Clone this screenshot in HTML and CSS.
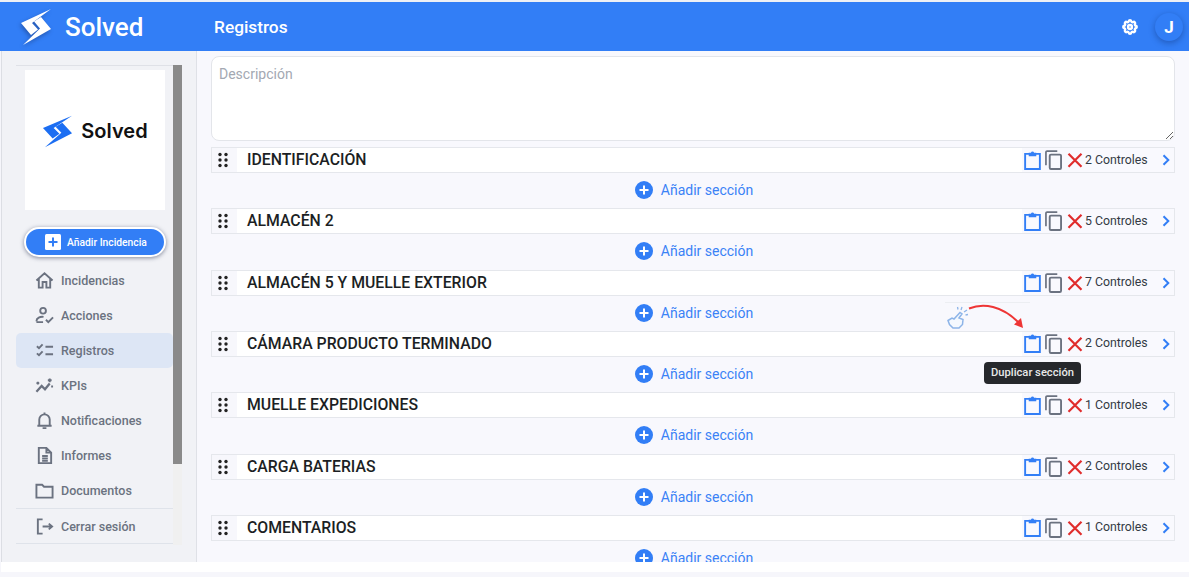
FILE: index.html
```html
<!DOCTYPE html>
<html lang="es">
<head>
<meta charset="utf-8">
<title>Registros</title>
<link rel="stylesheet" href="styles.css">
</head>
<body>
<svg class="defs" aria-hidden="true">
  <symbol id="bolt" viewBox="0 0 32 38" preserveAspectRatio="none">
    <polygon points="31,1 1,15 11,27 18,21.500 12,15"/>
    <polygon points="3,37 31,21 21,9 14,13.500 20,20.500"/>
  </symbol>
  <symbol id="i-clip" viewBox="0 0 18 21">
    <path d="M5.500 4H1.200v16h15.600V4h-4.300" fill="none" stroke="currentColor" stroke-width="2"/>
    <path d="M5 6.500V2.800h2.300a1.800 1.800 0 0 1 3.400 0H13v3.700z" fill="currentColor"/>
  </symbol>
  <symbol id="i-copy" viewBox="0 0 18 21">
    <path d="M1 16V2.200A1.200 1.200 0 0 1 2.200 1H13" fill="none" stroke="currentColor" stroke-width="1.800"/>
    <rect x="5" y="4.800" width="12" height="15.200" rx="1.300" fill="none" stroke="currentColor" stroke-width="2"/>
  </symbol>
  <symbol id="i-x" viewBox="0 0 16 16">
    <path d="M1.500 1.800L14.500 14.800M14.500 1.800L1.500 14.800" fill="none" stroke="currentColor" stroke-width="2.200"/>
  </symbol>
  <symbol id="i-chev" viewBox="0 0 8 12">
    <path d="M1.500 1.300L6.300 6 1.500 10.700" fill="none" stroke="currentColor" stroke-width="2"/>
  </symbol>
  <symbol id="i-grip" viewBox="0 0 10 16">
    <circle cx="2" cy="2.500" r="1.700"/><circle cx="8" cy="2.500" r="1.700"/>
    <circle cx="2" cy="8" r="1.700"/><circle cx="8" cy="8" r="1.700"/>
    <circle cx="2" cy="13.500" r="1.700"/><circle cx="8" cy="13.500" r="1.700"/>
  </symbol>
  <symbol id="i-add" viewBox="0 0 18 18">
    <circle cx="9" cy="9" r="9" fill="currentColor"/>
    <path d="M9 4.500v9M4.500 9h9" stroke="#fff" stroke-width="2"/>
  </symbol>
</svg>

<div class="top-strip"></div>
<header class="topbar">
  <div class="brand">
    <svg class="brand-mark"><use href="#bolt"/></svg>
    <span class="brand-name">Solved</span>
  </div>
  <h1 class="page-title">Registros</h1>
  <svg class="gear" viewBox="0 0 24 24" fill="none" stroke="currentColor" stroke-width="3.200"><path d="M10.325 4.317c.426-1.756 2.924-1.756 3.35 0a1.724 1.724 0 002.573 1.066c1.543-.94 3.31.826 2.37 2.37a1.724 1.724 0 001.065 2.572c1.756.426 1.756 2.924 0 3.35a1.724 1.724 0 00-1.066 2.573c.94 1.543-.826 3.31-2.37 2.37a1.724 1.724 0 00-2.572 1.065c-.426 1.756-2.924 1.756-3.35 0a1.724 1.724 0 00-2.573-1.066c-1.543.94-3.31-.826-2.37-2.37a1.724 1.724 0 00-1.065-2.572c-1.756-.426-1.756-2.924 0-3.35a1.724 1.724 0 001.066-2.573c-.94-1.543.826-3.31 2.37-2.37.996.608 2.296.07 2.572-1.065z"/><circle cx="12" cy="12" r="2.600"/></svg>
  <div class="avatar">J</div>
</header>

<div class="layout">
  <aside class="sidebar">
    <div class="side-col">
      <div class="logo-card">
        <svg class="logo-mark"><use href="#bolt"/></svg>
        <span class="logo-name">Solved</span>
      </div>
      <button class="add-btn" type="button">
        <svg class="add-box" viewBox="0 0 16 16"><rect width="16" height="16" rx="1.500" fill="#fff"/><path d="M8 3.500v9M3.500 8h9" stroke="#327ef6" stroke-width="2"/></svg>
        <span>Añadir Incidencia</span>
      </button>
      <nav class="nav">
        <a class="nav-item"><svg class="nav-ico" viewBox="0 0 20 20"><path d="M1.500 10L10 2.500 18.500 10M4 8v9.500h4v-6h4v6h4V8" /></svg>Incidencias</a>
        <a class="nav-item"><svg class="nav-ico" viewBox="0 0 20 20"><circle cx="8.500" cy="5" r="3"/><path d="M1.500 16c0-3.500 4-5 7.500-4.500M1.500 17h7M11.500 14.500l2.500 2.500 5-5"/></svg>Acciones</a>
        <a class="nav-item nav-active"><svg class="nav-ico" viewBox="0 0 20 20"><path d="M2 5.500l2.200 2L8 3.500M2 13l2.200 2L8 11M11 6h8M11 14h8"/></svg>Registros</a>
        <a class="nav-item"><svg class="nav-ico" viewBox="0 0 20 20"><path d="M1.500 16.500L7 10.500l3.500 3.500 5-6" stroke-width="2.400"/><path d="M15.500 2.500v4M13.500 4.500h4M3 6v3M1.500 7.500h3M18 10v2M17 11h2"/></svg>KPIs</a>
        <a class="nav-item"><svg class="nav-ico" viewBox="0 0 20 20"><path d="M4.500 15.500V9a5.500 5.500 0 0 1 11 0v6.500M2.500 15.500h15M10 1.500v2M8 18h4"/></svg>Notificaciones</a>
        <a class="nav-item"><svg class="nav-ico" viewBox="0 0 20 20"><path d="M4 2h8l5 5v11H4zM12 2v5h5M7.500 10.500h6M7.500 13h6M7.500 15.500h6"/></svg>Informes</a>
        <a class="nav-item"><svg class="nav-ico" viewBox="0 0 20 20"><path d="M1.500 4h6l2 2h9v11.500h-17z"/></svg>Documentos</a>
        <a class="nav-item nav-exit"><svg class="nav-ico" viewBox="0 0 20 20"><path d="M8 2.500H3v15h5M8 10h10M14.500 7l3.500 3-3.500 3"/></svg>Cerrar sesión</a>
      </nav>
    </div>
    <div class="scroll-track"><div class="scroll-thumb"></div></div>
  </aside>

  <main class="content">
    <textarea class="desc" placeholder="Descripción"></textarea>

    <div class="sec-row">
      <span class="grip"><svg><use href="#i-grip"/></svg></span>
      <span class="sec-title">IDENTIFICACIÓN</span>
      <span class="sec-actions">
        <svg class="a-clip"><use href="#i-clip"/></svg><svg class="a-copy"><use href="#i-copy"/></svg><svg class="a-x"><use href="#i-x"/></svg>
        <span class="a-count">2 Controles</span><svg class="a-chev"><use href="#i-chev"/></svg>
      </span>
    </div>
    <div class="add-sec"><svg><use href="#i-add"/></svg>Añadir sección</div>

    <div class="sec-row">
      <span class="grip"><svg><use href="#i-grip"/></svg></span>
      <span class="sec-title">ALMACÉN 2</span>
      <span class="sec-actions">
        <svg class="a-clip"><use href="#i-clip"/></svg><svg class="a-copy"><use href="#i-copy"/></svg><svg class="a-x"><use href="#i-x"/></svg>
        <span class="a-count">5 Controles</span><svg class="a-chev"><use href="#i-chev"/></svg>
      </span>
    </div>
    <div class="add-sec"><svg><use href="#i-add"/></svg>Añadir sección</div>

    <div class="sec-row">
      <span class="grip"><svg><use href="#i-grip"/></svg></span>
      <span class="sec-title">ALMACÉN 5 Y MUELLE EXTERIOR</span>
      <span class="sec-actions">
        <svg class="a-clip"><use href="#i-clip"/></svg><svg class="a-copy"><use href="#i-copy"/></svg><svg class="a-x"><use href="#i-x"/></svg>
        <span class="a-count">7 Controles</span><svg class="a-chev"><use href="#i-chev"/></svg>
      </span>
    </div>
    <div class="add-sec"><svg><use href="#i-add"/></svg>Añadir sección</div>

    <div class="sec-row">
      <span class="grip"><svg><use href="#i-grip"/></svg></span>
      <span class="sec-title">CÁMARA PRODUCTO TERMINADO</span>
      <span class="sec-actions">
        <svg class="a-clip"><use href="#i-clip"/></svg><svg class="a-copy"><use href="#i-copy"/></svg><svg class="a-x"><use href="#i-x"/></svg>
        <span class="a-count">2 Controles</span><svg class="a-chev"><use href="#i-chev"/></svg>
      </span>
    </div>
    <div class="add-sec"><svg><use href="#i-add"/></svg>Añadir sección</div>

    <div class="sec-row">
      <span class="grip"><svg><use href="#i-grip"/></svg></span>
      <span class="sec-title">MUELLE EXPEDICIONES</span>
      <span class="sec-actions">
        <svg class="a-clip"><use href="#i-clip"/></svg><svg class="a-copy"><use href="#i-copy"/></svg><svg class="a-x"><use href="#i-x"/></svg>
        <span class="a-count">1 Controles</span><svg class="a-chev"><use href="#i-chev"/></svg>
      </span>
    </div>
    <div class="add-sec"><svg><use href="#i-add"/></svg>Añadir sección</div>

    <div class="sec-row">
      <span class="grip"><svg><use href="#i-grip"/></svg></span>
      <span class="sec-title">CARGA BATERIAS</span>
      <span class="sec-actions">
        <svg class="a-clip"><use href="#i-clip"/></svg><svg class="a-copy"><use href="#i-copy"/></svg><svg class="a-x"><use href="#i-x"/></svg>
        <span class="a-count">2 Controles</span><svg class="a-chev"><use href="#i-chev"/></svg>
      </span>
    </div>
    <div class="add-sec"><svg><use href="#i-add"/></svg>Añadir sección</div>

    <div class="sec-row">
      <span class="grip"><svg><use href="#i-grip"/></svg></span>
      <span class="sec-title">COMENTARIOS</span>
      <span class="sec-actions">
        <svg class="a-clip"><use href="#i-clip"/></svg><svg class="a-copy"><use href="#i-copy"/></svg><svg class="a-x"><use href="#i-x"/></svg>
        <span class="a-count">1 Controles</span><svg class="a-chev"><use href="#i-chev"/></svg>
      </span>
    </div>
    <div class="add-sec"><svg><use href="#i-add"/></svg>Añadir sección</div>

    <svg class="hint" viewBox="0 0 90 32" fill="none">
      <path d="M0 .5H85" stroke="#eceef2"/>
      <path d="M24 6.500C38 1 57 3 75 22" stroke="#ee3535" stroke-width="2"/>
      <path d="M69 22.500l9 3.500-2-10z" fill="#ee3535"/>
      <path d="M3 18.500l4 -2.500 2 1 6-6.500 2 1.500-3 4 4 1.500-.5 5-3.500 3.500H8l-3.500-3.500z" stroke="#8db4e8" stroke-width="1.500" fill="#f4f8fe"/>
      <path d="M16 8l1-3M19 10l3-2M20.500 13l2.500-.500M13 7.500l-.5-2.500" stroke="#8db4e8" stroke-width="1.300"/>
    </svg>
    <div class="tooltip">Duplicar sección</div>
  </main>
</div>
<div class="bottom-white"></div>
</body>
</html>
```

FILE: styles.css
```css
* { box-sizing: border-box; }
html, body { margin: 0; height: 100%; overflow: hidden; }
body {
  display: flex;
  flex-direction: column;
  background: #f6f6fb;
  font-family: Roboto, "Liberation Sans", sans-serif;
}
.defs { display: none; }
.top-strip { height: 2px; flex: none; background: #eef0f5; }

.topbar {
  flex: none;
  height: 49px;
  display: flex;
  align-items: center;
  background: #327ef6;
  color: #fff;
  padding-left: 20px;
  padding-right: 6px;
}
.brand { width: 194px; display: flex; align-items: center; }
.brand-mark {
  width: 32px;
  height: 38px;
  fill: #fff;
  filter: drop-shadow(-1px 2px 2px rgba(20, 40, 90, .45));
}
.brand-name {
  margin-left: 13px;
  font-size: 26px;
  font-weight: 500;
  line-height: 1;
}
.page-title {
  margin: 0;
  flex: 1;
  font-size: 17.300px;
  font-weight: 500;
}
.gear { width: 18px; height: 18px; margin-right: 16px; }
.avatar {
  width: 28px;
  height: 28px;
  border-radius: 50%;
  background: #327ef6;
  box-shadow: 0 2px 6px rgba(10, 40, 100, .4);
  display: flex;
  align-items: center;
  justify-content: center;
  font-size: 17px;
  font-weight: 700;
}

.layout { flex: none; height: 511px; display: flex; overflow: hidden; }

.sidebar {
  flex: none;
  width: 196px;
  height: 100%;
  display: flex;
  align-items: flex-start;
  margin-left: 1px;
  padding: 14px 0 0 14px;
  background: #f1f2f6;
  border-left: 1px solid #dcdee4;
  border-right: 1px solid #dfe1e7;
}
.side-col { width: 157px; border-top: 1px solid #dfe1e7; }
.logo-card {
  width: 140px;
  height: 140px;
  margin: 4px 0 0 9px;
  background: #fff;
  display: flex;
  align-items: center;
  justify-content: center;
  padding-bottom: 18px;
}
.logo-mark { width: 31px; height: 33px; fill: #1c6ef2; flex: none; }
.logo-name {
  margin-left: 8px;
  font-family: Inter, "Liberation Sans", sans-serif;
  font-size: 20px;
  font-weight: 600;
  color: #111;
}
.add-btn {
  display: flex;
  align-items: center;
  width: 142px;
  height: 30px;
  margin: 17px 0 6px 8px;
  padding: 0 0 0 19px;
  border: 2px solid #fff;
  border-radius: 15px;
  background: #327ef6;
  color: #fff;
  font-family: inherit;
  font-size: 10.300px;
  font-weight: 500;
  box-shadow: 0 1px 4px rgba(40, 50, 80, .55);
}
.add-box { width: 16px; height: 16px; margin-right: 6px; flex: none; }
.nav { display: flex; flex-direction: column; }
.nav-item {
  height: 35px;
  display: flex;
  align-items: center;
  padding-left: 19px;
  font-size: 12.500px;
  font-weight: 500;
  color: #6b7280;
  border-radius: 5px;
}
.nav-active { background: #dde6f5; }
.nav-exit {
  height: 36px;
  border-top: 1px solid #dfe3ea;
  border-bottom: 1px solid #dfe3ea;
  border-radius: 0;
}
.nav-ico {
  width: 19px;
  height: 19px;
  margin-right: 7px;
  flex: none;
  fill: none;
  stroke: #6b7280;
  stroke-width: 2;
}
.scroll-track { flex: none; width: 9px; height: 480px; background: #f0f0f0; }
.scroll-thumb { height: 399px; background: #8a8a8a; }

.content {
  position: relative;
  flex: 1;
  min-width: 0;
  padding: 5px 14px 0;
  background: #f8f8fd;
}
.desc {
  display: block;
  width: 100%;
  height: 85px;
  margin: 0 0 6px;
  padding: 9px 7px;
  border: 1px solid #e3e5ea;
  border-radius: 8px;
  background: #fff;
  font-family: inherit;
  font-size: 14px;
  resize: vertical;
  outline: none;
}
.desc::placeholder { color: #a3a8b2; }

.sec-row {
  display: flex;
  align-items: center;
  height: 26px;
  border: 1px solid #e5e7ec;
  background: #fff;
}
.grip {
  flex: none;
  width: 25px;
  height: 100%;
  display: flex;
  align-items: center;
  justify-content: center;
  background: #f7f7fc;
}
.grip svg { width: 10px; height: 16px; fill: #222; margin-right: 4px; }
.sec-title {
  flex: 1;
  padding-left: 10px;
  margin-top: -1px;
  font-size: 15.800px;
  font-weight: 500;
  color: #1c1f24;
}
.sec-actions {
  flex: none;
  width: 152px;
  height: 100%;
  display: flex;
  align-items: center;
  background: #f9f9fe;
  padding-left: 2px;
  font-size: 12.300px;
  color: #333a44;
}
.a-clip { width: 17px; height: 20px; color: #327ef6; margin-right: 4px; margin-top: -1px; }
.a-copy { width: 17px; height: 20px; color: #6b7280; margin-right: 5px; }
.a-x { width: 16px; height: 16px; color: #e02d2d; margin-right: 2px; }
.a-count { width: 77px; margin-top: -1px; }
.a-chev { width: 8px; height: 12px; color: #327ef6; }

.add-sec {
  height: 35.330px;
  display: flex;
  align-items: center;
  justify-content: center;
  padding: 0 0 1px 2px;
  font-size: 14px;
  color: #3b82f6;
}
.add-sec svg { width: 18px; height: 18px; margin-right: 8px; color: #327ef6; }

.hint {
  position: absolute;
  left: 748px;
  top: 251px;
  width: 90px;
  height: 32px;
}
.tooltip {
  position: absolute;
  left: 787px;
  top: 311px;
  width: 97px;
  height: 22px;
  padding-bottom: 2px;
  border-radius: 4px;
  background: #26282c;
  color: #e8e8e8;
  font-size: 11.200px;
  font-weight: 500;
  display: flex;
  align-items: center;
  justify-content: center;
}
.bottom-white { flex: none; height: 10px; background: #fff; margin-left: 1px; }
```
